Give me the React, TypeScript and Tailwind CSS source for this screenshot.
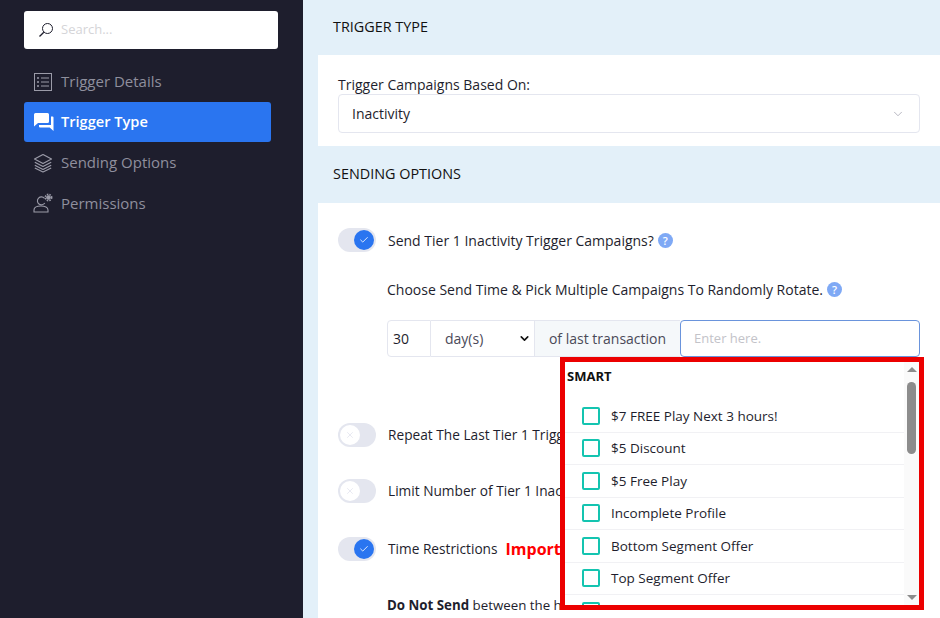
import { ChevronDown, Check, X } from 'lucide-react';

const campaigns = ['$7 FREE Play Next 3 hours!', '$5 Discount', '$5 Free Play', 'Incomplete Profile', 'Bottom Segment Offer', 'Top Segment Offer', ''];

const SearchIcon = () => (
  <svg width="18" height="18" viewBox="0 0 18 18" fill="none" stroke="#1e1e2d" strokeWidth="1">
    <circle cx="10.5" cy="7.5" r="5" />
    <path d="M6.8 11.2 2.5 15.5" strokeWidth="1.3" />
  </svg>
);

const DetailsIcon = () => (
  <svg width="20" height="20" viewBox="0 0 20 20" fill="none" stroke="#9b9ba8" strokeWidth="1">
    <rect x="1.500" y="1.500" width="17" height="17" />
    <path d="M8 6h8M8 10h8M8 14h8" />
    <path d="M4 6h2M4 10h2M4 14h2" strokeWidth="1.400" />
  </svg>
);

const ChatIcon = () => (
  <svg width="21" height="20" viewBox="0 0 21 20" fill="#fff">
    <path d="M2.500 1h12a1.500 1.500 0 0 1 1.500 1.500v7a1.500 1.500 0 0 1-1.500 1.500H5l-4 3.500V2.500A1.500 1.500 0 0 1 2.500 1Z" />
    <path d="M18 4.500h1.500a1 1 0 0 1 1 1V19l-3.800-3.500H7a1 1 0 0 1-1-1V13h12Z" />
  </svg>
);

const LayersIcon = () => (
  <svg width="20" height="20" viewBox="0 0 20 20" fill="none" stroke="#9b9ba8" strokeWidth="1.200" strokeLinejoin="round">
    <path d="M10 1.500 18.500 6 10 10.500 1.500 6Z" />
    <path d="M1.800 9.300 10 13.500l8.200-4.200" />
    <path d="M1.800 12.300 10 16.500l8.200-4.200" />
    <path d="M1.800 15 10 19l8.200-4" />
  </svg>
);

const PermissionsIcon = () => (
  <svg width="20" height="20" viewBox="0 0 20 20" fill="none" stroke="#9b9ba8" strokeWidth="1.100">
    <path d="M11.500 5.300A4 4 0 1 0 11.800 10" />
    <path d="M1 19v-2c0-2.500 2.500-4 7-4 2 0 3.500.3 5 1 1.300.7 2 1.800 2 3v2Z" />
    <circle cx="15.500" cy="4.500" r="1.800" fill="#9b9ba8" />
    <circle cx="15.500" cy="4.500" r="3.200" strokeDasharray="1.500 1.100" strokeWidth="1.500" />
  </svg>
);

const Help = () => (
  <span className="flex h-[15px] w-[15px] items-center justify-center rounded-full bg-[#7fa9f5] text-[11px] font-semibold leading-none text-white">?</span>
);

const Toggle = ({ on }: { on: boolean }) => (
  <span className={`flex h-6 w-[38px] shrink-0 items-center rounded-full bg-[#e4e6ef] px-[2px] ${on ? 'justify-end' : 'justify-start'}`}>
    {on ? (
      <span className="flex h-5 w-5 items-center justify-center rounded-full bg-[#2a75f0]">
        <Check size={10} color="#fff" />
      </span>
    ) : (
      <span className="flex h-5 w-5 items-center justify-center rounded-full bg-white">
        <X size={10} color="#e4e6ef" />
      </span>
    )}
  </span>
);

const NavItem = ({ icon, label, active }: { icon: React.ReactNode; label: string; active?: boolean }) => (
  <div className={`flex h-10 items-center rounded-[3px] pl-[9px] pt-px ${active ? 'bg-[#2a75f0] text-[14.6px] font-semibold text-white' : 'text-[15px] text-[#8f8f9d]'}`}>
    <span className="flex w-7 shrink-0 items-center">{icon}</span>
    {label}
  </div>
);

export default function App() {
  return (
    <div className="flex h-[618px] w-[940px] overflow-hidden bg-[#e3f0f9] text-[#1e1e2d]" style={{ fontFamily: '"Open Sans", "Liberation Sans", sans-serif' }}>
      {/* Sidebar */}
      <aside className="h-full w-[303px] shrink-0 bg-[#1e1e2d] pl-6 pt-[11px]">
        <div className="flex h-[38px] w-[254px] items-center rounded-[3px] bg-white pl-[13px] text-[13px] text-[#d5d5d8]">
          <span className="mr-[6px]"><SearchIcon /></span>
          Search...
        </div>
        <nav className="mt-[12px] flex w-[247px] flex-col gap-[0.5px]">
          <NavItem icon={<DetailsIcon />} label="Trigger Details" />
          <NavItem icon={<ChatIcon />} label="Trigger Type" active />
          <NavItem icon={<LayersIcon />} label="Sending Options" />
          <NavItem icon={<PermissionsIcon />} label="Permissions" />
        </nav>
      </aside>

      {/* Main */}
      <main className="relative min-w-0 flex-1 pl-[15px]">
        <h2 className="flex h-[55px] items-center pb-[2px] pl-[15px] text-[14.4px] font-medium text-[#111]">TRIGGER TYPE</h2>
        <section className="h-[91px] bg-white px-5 pt-[20px]">
          <p className="text-[14px] leading-[19px]">Trigger Campaigns Based On:</p>
          <div className="flex h-[39px] w-[582px] items-center justify-between rounded-[4px] border border-[#e4e6ef] pl-[13px] pr-[14px] text-[14px]">
            Inactivity
            <ChevronDown size={14} color="#9a9aa8" strokeWidth={1.2} />
          </div>
        </section>
        <h2 className="flex h-[57px] items-center pb-[2px] pl-[15px] text-[14.4px] font-medium text-[#111]">SENDING OPTIONS</h2>
        <section className="h-[415px] overflow-hidden bg-white pl-5 pt-[25px] text-[14px]">
          <div className="flex h-[24px] items-center gap-[12px]">
            <Toggle on />
            <span className="mr-[-8px]">Send Tier 1 Inactivity Trigger Campaigns?</span>
            <Help />
          </div>
          <div className="ml-[49px] mt-[27px] flex h-[20px] items-center gap-[4px]">
            <span>Choose Send Time &amp; Pick Multiple Campaigns To Randomly Rotate.</span>
            <Help />
          </div>
          <div className="ml-[49px] mt-[21px] flex h-[37px] w-[533px]">
            <div className="flex w-[44px] items-center rounded-l-[4px] border border-[#e4e6ef] pl-[5px]">30</div>
            <div className="flex w-[104px] items-center justify-between border-y border-r border-[#e4e6ef] pl-[14px] pr-[3px] text-[#4a4a58]">
              day(s)
              <ChevronDown size={13} color="#111" strokeWidth={3} />
            </div>
            <div className="flex w-[145px] items-center justify-center border-y border-[#e4e6ef] bg-[#f5f8fa] text-[#4a4a58]">of last transaction</div>
            <div className="flex flex-1 items-center rounded-[4px] border border-[#6a94dc] pl-[13px] text-[13px] text-[#c3c3c9]">Enter here.</div>
          </div>
          <div className="mt-[66px] flex h-6 items-center gap-[12px] text-[13.7px]">
            <Toggle on={false} />
            <span>Repeat The Last Tier 1 Trigger</span>
          </div>
          <div className="mt-[32px] flex h-6 items-center gap-[12px] text-[13.7px]">
            <Toggle on={false} />
            <span>Limit Number of Tier 1 Inactivity</span>
          </div>
          <div className="mt-[34px] flex h-6 items-center gap-[12px] text-[13.7px]">
            <Toggle on />
            <span>Time Restrictions</span>
            <span className="ml-[-4px] text-[16px] font-bold text-[#ff0000]">Important</span>
          </div>
          <p className="ml-[49px] mt-[34px] text-[13.3px] leading-[20px]"><b>Do Not Send</b> between the hours</p>
        </section>

        {/* Campaign dropdown */}
        <div className="absolute left-[257px] top-[357px] flex h-[253px] w-[364px] border-[5px] border-[#ec0000] bg-white">
          <div className="min-w-0 flex-1 overflow-hidden">
            <p className="pl-[2px] pt-[4px] text-[13px] font-bold leading-[20px] text-[#111]">SMART</p>
            <ul className="mt-[14px]">
              {campaigns.map((name) => (
                <li key={name} className="flex h-[32.5px] items-center border-b border-[#f1f1f4] pl-[17px] text-[13.5px]">
                  <span className="mr-[11px] h-[18px] w-[18px] shrink-0 rounded-[2px] border-2 border-[#14c4b0]" />
                  {name}
                </li>
              ))}
            </ul>
          </div>
          <div className="flex w-[15px] shrink-0 flex-col items-center bg-[#fafafa]">
            <span className="mt-[5px] h-0 w-0 border-x-[5px] border-b-[5px] border-x-transparent border-b-[#8c8c8c]" />
            <span className="mt-[10px] h-[72px] w-[9px] rounded-full bg-[#8c8c8c]" />
            <span className="mt-auto mb-[5px] h-0 w-0 border-x-[5px] border-t-[5px] border-x-transparent border-t-[#8c8c8c]" />
          </div>
        </div>
      </main>
    </div>
  );
}
